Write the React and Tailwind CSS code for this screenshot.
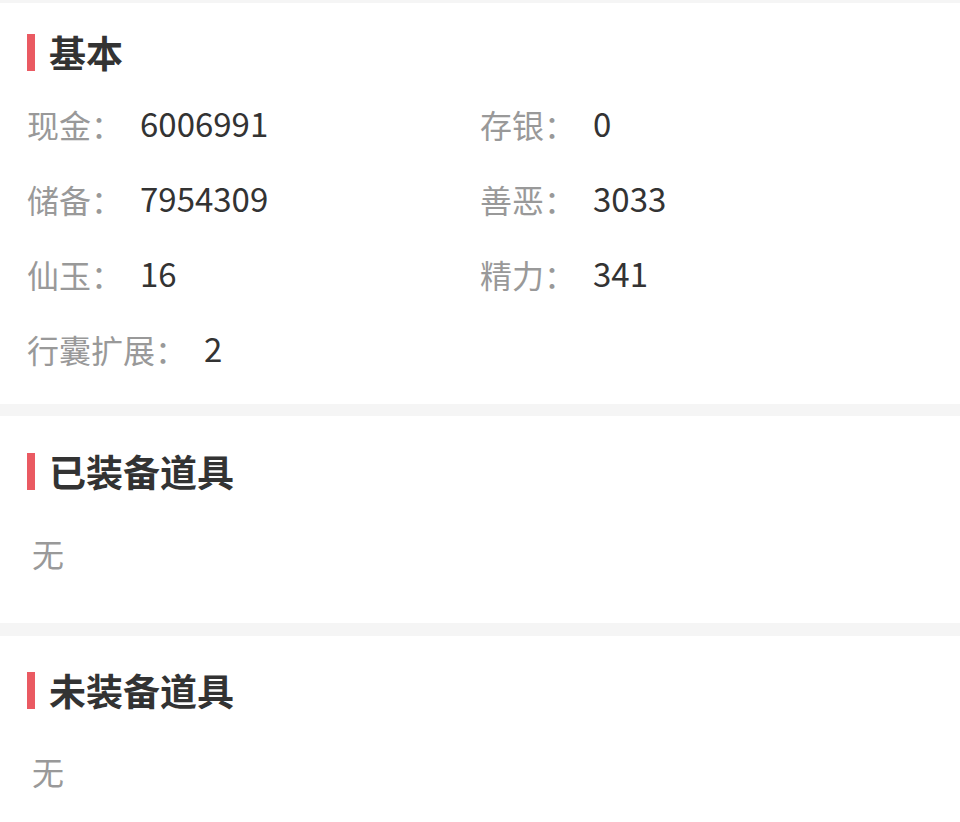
const BASIC = [
  ["现金", "6006991"],
  ["存银", "0"],
  ["储备", "7954309"],
  ["善恶", "3033"],
  ["仙玉", "16"],
  ["精力", "341"],
  ["行囊扩展", "2"],
];

function Title({ children }) {
  return (
    <div className="flex h-[40px] items-center">
      <span className="h-[37px] w-[8px] bg-[#ea5a62]" />
      <h2 className="ml-[14px] text-[37px] font-bold leading-[40px] text-[#333333]">{children}</h2>
    </div>
  );
}

function Empty() {
  return <p className="pl-[5px] text-[32px] leading-[48px] text-[#999999]">无</p>;
}

export default function App() {
  return (
    <div
      className="min-h-screen bg-white"
      style={{ fontFamily: '"Noto Sans CJK SC", "Noto Sans", sans-serif' }}
    >
      <div className="h-[3px] bg-[#f5f5f5]" />

      <section className="px-[27px] pt-[29px] pb-[18px]">
        <Title>基本</Title>
        <div className="mt-[14px] grid grid-cols-2">
          {BASIC.map(([label, value]) => (
            <div key={label} className="flex h-[75px] items-center">
              <span className="text-[32px] text-[#999999]">{label}：</span>
              <span className="ml-[17px] text-[33px] text-[#333333]">{value}</span>
            </div>
          ))}
        </div>
      </section>

      <div className="h-[12px] bg-[#f5f5f5]" />

      <section className="px-[27px] pt-[35px] pb-[46px]">
        <Title>已装备道具</Title>
        <div className="mt-[38px]">
          <Empty />
        </div>
      </section>

      <div className="h-[13px] bg-[#f5f5f5]" />

      <section className="px-[27px] pt-[34px] pb-[44px]">
        <Title>未装备道具</Title>
        <div className="mt-[37px]">
          <Empty />
        </div>
      </section>
    </div>
  );
}
